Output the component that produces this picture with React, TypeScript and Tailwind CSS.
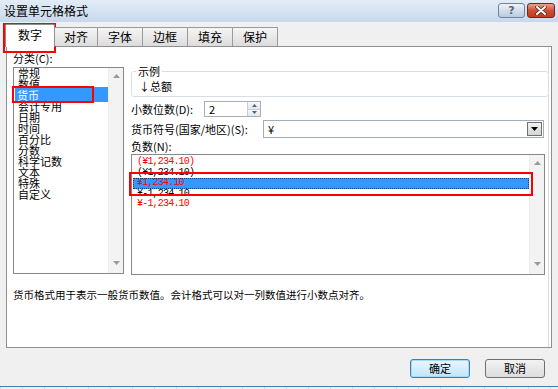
const categories = ['常规', '数值', '货币', '会计专用', '日期', '时间', '百分比', '分数', '科学记数', '文本', '特殊', '自定义'];

const negatives = [
  { text: '(¥1,234.10)', red: true },
  { text: '(¥1,234.10)', red: false },
  { text: '¥1,234.10', red: true, selected: true },
  { text: '¥-1,234.10', red: false },
  { text: '¥-1,234.10', red: true },
];

const tabs = [
  { label: '对齐', w: 'w-[43px]' },
  { label: '字体', w: 'w-[45px]' },
  { label: '边框', w: 'w-[45px]' },
  { label: '填充', w: 'w-[45px]' },
  { label: '保护', w: 'w-[45px]' },
];

const UpArrow = () => (
  <svg width="7" height="4" viewBox="0 0 7 4">
    <path d="M0 4 L3.5 0 L7 4 Z" fill="#9a9a9a" />
  </svg>
);

const DownArrow = () => (
  <svg width="7" height="4" viewBox="0 0 7 4">
    <path d="M0 0 L3.5 4 L7 0 Z" fill="#9a9a9a" />
  </svg>
);

const ScrollBar = () => (
  <div className="w-[15px] self-stretch bg-[#f3f3f3] border-l border-[#ececec] flex flex-col items-center justify-between pt-[6px] pb-[8px]">
    <UpArrow />
    <DownArrow />
  </div>
);

const App = () => {
  return (
    <div className="relative w-[558px] h-[389px] overflow-hidden bg-[#f0f0f0] text-[11px] text-black font-['Noto_Sans_CJK_SC',sans-serif]">
      {/* Title bar */}
      <div className="h-[22px] flex items-start justify-between pl-[4px] pr-[3px] bg-gradient-to-b from-[#e2ecf7] to-[#c8d8eb]">
        <span className="text-[12px] leading-[22px]">设置单元格格式</span>
        <div className="flex gap-[2px] mt-[3px]">
          <div className="w-[27px] h-[15px] rounded-[3px] border border-[#71839b] bg-gradient-to-b from-[#eef3f9] via-[#d3deeb] to-[#b9cadf] flex items-center justify-center">
            <span className="text-[11px] leading-none font-bold text-[#5b6677] font-['DejaVu_Sans',sans-serif]">?</span>
          </div>
          <div className="w-[28px] h-[15px] rounded-[3px] border border-[#6b2a20] bg-gradient-to-b from-[#e9a18f] via-[#cf4e36] to-[#bf3b24] flex items-center justify-center">
            <svg width="12" height="9" viewBox="0 0 12 9">
              <path d="M2 1 L10 8 M10 1 L2 8" stroke="#5a1e14" strokeWidth="3.4" strokeLinecap="round" />
              <path d="M2 1 L10 8 M10 1 L2 8" stroke="#ffffff" strokeWidth="2" strokeLinecap="round" />
            </svg>
          </div>
        </div>
      </div>

      {/* Tabs */}
      <div className="relative z-10 flex items-end h-[25px] pl-[5px] -mb-px">
        <div className="w-[50px] h-[23px] bg-white border border-b-0 border-[#8e8f8f] rounded-t-[2px] flex items-center justify-center text-[12px] pb-[2px]">
          数字
        </div>
        {tabs.map((t) => (
          <div
            key={t.label}
            className={`${t.w} h-[19px] mb-px border border-[#9a9a9a] border-b-0 border-l-0 first:border-l bg-gradient-to-b from-[#f5f5f5] to-[#dcdcdc] flex items-center justify-center text-[12px]`}
          >
            {t.label}
          </div>
        ))}
      </div>

      {/* Panel */}
      <div className="ml-[6px] w-[546px] h-[302px] bg-white border border-[#8e8f8f] shadow-[inset_-2px_0_0_#ffffff,inset_-3px_0_0_#dcdcdc] flex flex-col">
        <div className="flex pl-[6px]">
          {/* Category column */}
          <div className="w-[111px] flex flex-col">
            <div className="h-[20px] leading-[14px] pt-[4px]">分类(C):</div>
            <div className="h-[207px] border border-[#828790] bg-white flex">
              <div className="flex-1 pl-[1px] flex flex-col">
                {categories.map((c) =>
                  c === '货币' ? (
                    <div key={c} className="relative h-[11px] leading-[11px]">
                      <div className="absolute left-0 right-0 top-[-3px] bottom-[-1px] bg-[#3399ff]" />
                      <span className="relative pl-[2px] text-white">{c}</span>
                    </div>
                  ) : (
                    <div key={c} className="h-[11px] leading-[11px] pl-[3px]">
                      {c}
                    </div>
                  ),
                )}
              </div>
              <ScrollBar />
            </div>
          </div>

          {/* Right column */}
          <div className="ml-[7px] w-[418px] flex flex-col">
            <fieldset className="mt-[18px] border border-[#d5dfe5] rounded-[3px] pl-[7px] pb-[3px]">
              <legend className="ml-[-3px] px-[2px] leading-[13px] text-[11px]">示例</legend>
              <div className="leading-[13px] pt-[2px]">↓总额</div>
            </fieldset>

            <div className="flex items-center mt-[4px] h-[16px]">
              <span className="w-[73px]">小数位数(D):</span>
              <div className="w-[57px] h-[16px] border border-[#abadb3] flex">
                <span className="flex-1 pl-[4px] leading-[14px]">2</span>
                <div className="w-[13px] flex flex-col border-l border-[#c9cdd3]">
                  <div className="flex-1 flex items-center justify-center bg-gradient-to-b from-[#f7f8fa] to-[#e3e8ef] border-b border-[#c9cdd3]">
                    <svg width="5" height="3" viewBox="0 0 5 3"><path d="M0 3 L2.5 0 L5 3 Z" fill="#4d6185" /></svg>
                  </div>
                  <div className="flex-1 flex items-center justify-center bg-gradient-to-b from-[#f7f8fa] to-[#e3e8ef]">
                    <svg width="5" height="3" viewBox="0 0 5 3"><path d="M0 0 L2.5 3 L5 0 Z" fill="#4d6185" /></svg>
                  </div>
                </div>
              </div>
            </div>

            <div className="flex items-center mt-[3px] h-[18px]">
              <span className="w-[132px]">货币符号(国家/地区)(S):</span>
              <div className="w-[281px] h-[18px] border border-[#a5acb5] flex items-center">
                <span className="flex-1 pl-[4px] leading-[16px]">¥</span>
                <div className="w-[15px] h-[14px] mr-[1px] border border-[#707070] bg-gradient-to-b from-[#f2f2f2] to-[#d5d5d5] flex items-center justify-center">
                  <svg width="7" height="4" viewBox="0 0 7 4"><path d="M0 0 L3.5 4 L7 0 Z" fill="#000" /></svg>
                </div>
              </div>
            </div>

            <div className="mt-[1px] h-[15px] leading-[15px]">负数(N):</div>

            <div className="h-[121px] w-[414px] border border-[#828790] flex">
              <div className="flex-1 pt-[2px] pl-[1px] flex flex-col font-['Liberation_Mono',monospace] text-[10px] tracking-[-0.8px]">
                {negatives.map((n, i) => (
                  <div
                    key={i}
                    className={`h-[10.5px] leading-[10.5px] pl-[4px] ${n.red ? 'text-[#ff0000]' : 'text-black'} ${
                      n.selected ? 'bg-[#3399ff] outline-1 outline-dotted outline-[#1a3e6b] -outline-offset-1' : ''
                    }`}
                  >
                    {n.text}
                  </div>
                ))}
              </div>
              <ScrollBar />
            </div>
          </div>
        </div>

        <div className="mt-[13px] pl-[6px] text-[10.5px] leading-[14px]">
          货币格式用于表示一般货币数值。会计格式可以对一列数值进行小数点对齐。
        </div>
      </div>

      {/* Buttons */}
      <div className="flex justify-end gap-[15px] pr-[13px] mt-[11px]">
        <div className="w-[60px] h-[19px] rounded-[3px] border border-[#3c7fb1] bg-gradient-to-b from-[#eaf6fd] to-[#bee6fd] shadow-[inset_0_0_0_1px_#a7d9f5] flex items-center justify-center text-[11px]">
          确定
        </div>
        <div className="w-[60px] h-[19px] rounded-[3px] border border-[#707070] bg-gradient-to-b from-[#f2f2f2] to-[#dddddd] flex items-center justify-center text-[11px]">
          取消
        </div>
      </div>

      {/* Bottom edge */}
      <div className="absolute left-0 right-0 top-[386px] h-[1px] bg-[#3f7fb8]" />
      <div className="absolute left-0 right-0 top-[387px] h-[2px] bg-[repeating-linear-gradient(90deg,#d8d8d8_0px,#d8d8d8_1px,transparent_1px,transparent_22px)]" />

      {/* Red annotation boxes */}
      <div className="absolute left-[3px] top-[23px] w-[53px] h-[30px] border-2 border-[#ff0000]" />
      <div className="absolute left-[12px] top-[86px] w-[82px] h-[17px] border-2 border-[#ff0000]" />
      <div className="absolute left-[129px] top-[172px] w-[404px] h-[24px] border-2 border-[#ff0000]" />
    </div>
  );
};

export default App;
